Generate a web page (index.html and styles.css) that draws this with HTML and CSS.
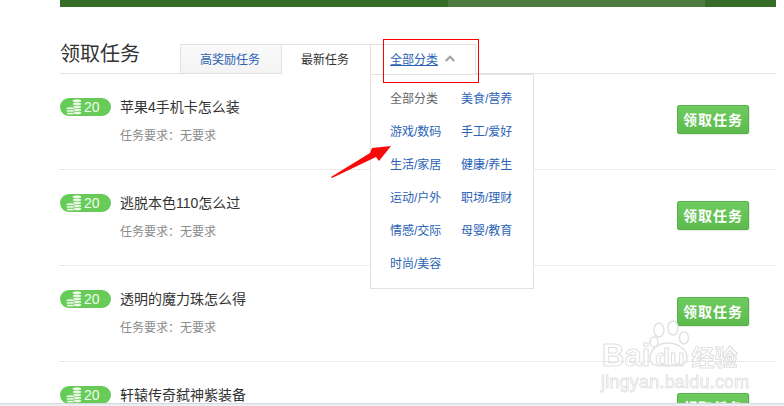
FILE: index.html
```html
<!DOCTYPE html>
<html lang="zh">
<head>
<meta charset="utf-8">
<title>领取任务</title>
<link rel="stylesheet" href="styles.css">
</head>
<body>
<svg class="defs" width="0" height="0" aria-hidden="true">
  <symbol id="coins" viewBox="0 0 16 16">
    <g fill="#eaf8e5">
      <ellipse cx="11" cy="1.800" rx="4.300" ry="1.600"/>
      <ellipse cx="11" cy="5" rx="4.300" ry="1.300"/>
      <ellipse cx="11" cy="8" rx="4.300" ry="1.300"/>
      <ellipse cx="11" cy="11" rx="4.300" ry="1.300"/>
      <ellipse cx="11" cy="14" rx="4.300" ry="1.300"/>
      <ellipse cx="4.500" cy="9.300" rx="4.300" ry="1.500" stroke="#66cb57" stroke-width=".8"/>
      <ellipse cx="4.500" cy="12" rx="4.300" ry="1.400" stroke="#66cb57" stroke-width=".8"/>
      <ellipse cx="4.500" cy="14.600" rx="4.300" ry="1.300" stroke="#66cb57" stroke-width=".8"/>
    </g>
  </symbol>
</svg>
<div class="page">
  <main class="wrap">
    <div class="banner"><div class="banner-mid"></div></div>
    <header class="head">
      <h1 class="title">领取任务</h1>
      <nav class="tabs">
        <a class="tab tab-off">高奖励任务</a>
        <a class="tab tab-on">最新任务</a>
        <div class="tab tab-cat">
          <a class="cat-link">全部分类</a>
          <svg class="caret" width="10" height="7" viewBox="0 0 10 7"><path d="M0.700 6 5 1.800 9.300 6" fill="none" stroke="#a0a0a0" stroke-width="2.200"/></svg>
          <div class="menu">
            <a class="menu-item menu-cur">全部分类</a><a class="menu-item">美食/营养</a>
            <a class="menu-item">游戏/数码</a><a class="menu-item">手工/爱好</a>
            <a class="menu-item">生活/家居</a><a class="menu-item">健康/养生</a>
            <a class="menu-item">运动/户外</a><a class="menu-item">职场/理财</a>
            <a class="menu-item">情感/交际</a><a class="menu-item">母婴/教育</a>
            <a class="menu-item">时尚/美容</a>
          </div>
        </div>
      </nav>
    </header>
    <ul class="list">
      <li class="row">
        <span class="badge"><svg class="coins" width="16" height="16"><use href="#coins"/></svg>20</span>
        <div class="info"><h2 class="name">苹果4手机卡怎么装</h2><p class="req">任务要求：无要求</p></div>
        <a class="btn">领取任务</a>
      </li>
      <li class="row">
        <span class="badge"><svg class="coins" width="16" height="16"><use href="#coins"/></svg>20</span>
        <div class="info"><h2 class="name">逃脱本色110怎么过</h2><p class="req">任务要求：无要求</p></div>
        <a class="btn">领取任务</a>
      </li>
      <li class="row">
        <span class="badge"><svg class="coins" width="16" height="16"><use href="#coins"/></svg>20</span>
        <div class="info"><h2 class="name">透明的魔力珠怎么得</h2><p class="req">任务要求：无要求</p></div>
        <a class="btn">领取任务</a>
      </li>
      <li class="row">
        <span class="badge"><svg class="coins" width="16" height="16"><use href="#coins"/></svg>20</span>
        <div class="info"><h2 class="name">轩辕传奇弑神紫装备</h2></div>
        <a class="btn">领取任务</a>
      </li>
    </ul>
  </main>
  <div class="mark-box"></div>
  <svg class="mark-arrow" width="64" height="36" viewBox="0 0 64 36"><polygon points="2,33 41,9 43,4 62,2 50,17 47,13 3,34" fill="#f80a0a"/></svg>
  <div class="wm">
    <svg class="wm-paw" width="44" height="48" viewBox="0 0 44 48"><g fill="#fff" stroke="#e2e2e2" stroke-width="1.500"><ellipse cx="11" cy="10" rx="5" ry="7"/><ellipse cx="25" cy="8" rx="5" ry="7"/><ellipse cx="36" cy="18" rx="4.500" ry="6"/><ellipse cx="6" cy="22" rx="4" ry="5"/><path d="M2 38c0-9 9-15 18-15s19 6 19 14c0 8-8 9-12 8-4 1-8 1-12 0-5 1-13 1-13-7z"/></g></svg>
    <div class="wm-logo">Bai<span class="wm-du">du</span><span class="wm-cn">经验</span></div>
    <div class="wm-url">jingyan.baidu.com</div>
  </div>
  <footer class="foot"></footer>
</div>
</body>
</html>
```
FILE: styles.css
```css
* { box-sizing: border-box; }
html, body { margin: 0; padding: 0; }
body {
  width: 784px;
  height: 406px;
  overflow: hidden;
  background: #fff;
  font-family: "Liberation Sans", "Noto Sans CJK SC", sans-serif;
  color: #333;
}
.defs { position: absolute; }
.page { position: relative; width: 784px; height: 406px; overflow: hidden; display: flex; flex-direction: column; }
.wrap { width: 716px; margin-left: 60px; height: 403px; overflow: visible; flex: none; }
.foot { height: 3px; flex: none; background: #e9eef1; border-top: 1px solid #d3dadd; position: relative; z-index: 5; }

.banner { height: 7px; background: #376c28; display: flex; padding-left: 388px; padding-right: 71px; }
.banner-mid { flex: 1; background: #4f7b43; }

.head { height: 67px; padding-top: 37px; border-bottom: 1px solid #e2e2e2; display: flex; align-items: stretch; }
.title { margin: -2px 0 0; width: 120px; font-size: 20px; line-height: 24px; height: 24px; font-weight: normal; color: #333; }
.tabs { display: flex; height: 30px; font-size: 12px; }
.tab { display: flex; align-items: center; height: 30px; padding-bottom: 2px; border-top: 1px solid #e2e2e2; }
.tab-off { width: 102px; padding-right: 2px; justify-content: center; color: #2a62b5; background: linear-gradient(#fafafa, #f3f3f3); border-left: 1px solid #e2e2e2; border-right: 1px solid #e2e2e2; border-bottom: 1px solid #e2e2e2; padding-bottom: 1px; }
.tab-on { width: 88px; padding-right: 2px; justify-content: center; color: #333; background: #fff; }
.tab-cat { position: relative; width: 106px; padding-left: 19px; background: #fff; border-left: 1px solid #e2e2e2; border-right: 1px solid #e2e2e2; z-index: 2; }
.cat-link { color: #2a62b5; text-decoration: underline; }
.caret { margin-left: 7px; }
.menu {
  position: absolute;
  left: -1px;
  top: 29px;
  width: 164px;
  height: 215px;
  padding: 8px 0 0 19px;
  background: #fff;
  border: 1px solid #e2e2e2;
  display: grid;
  grid-template-columns: 71px 71px;
  grid-auto-rows: 33px;
  align-content: start;
}
.menu-item { color: #2a62b5; line-height: 33px; font-size: 12px; white-space: nowrap; }
.menu-cur { color: #666; }

.list { list-style: none; margin: 0; padding: 0; }
.row { height: 96px; padding-top: 24px; display: flex; align-items: flex-start; border-bottom: 1px dotted #d6d6d6; }
.badge { width: 51px; height: 18px; flex: none; background: #66cb57; border-radius: 9px; display: flex; align-items: center; padding-left: 6px; gap: 2px; color: #f2fbef; font-size: 14px; }
.coins { flex: none; }
.info { flex: 1; margin-left: 9px; }
.name { margin: -1px 0 0; font-size: 14px; line-height: 20px; font-weight: normal; color: #333; }
.req { margin: 9px 0 0; font-size: 12px; line-height: 20px; color: #8c8c8c; }
.btn {
  flex: none;
  width: 72px;
  height: 29px;
  margin: 7px 27px 0 0;
  background: linear-gradient(#6fcb5f, #5dbb4e);
  border: 1px solid #55b347;
  border-radius: 2px;
  box-shadow: 1px 1px 0 #e9e9e9;
  color: #fff;
  font-family: "Noto Sans CJK SC", sans-serif;
  font-size: 14px;
  font-weight: bold;
  line-height: 27px;
  text-align: center;
  letter-spacing: 1px;
}

.mark-box { position: absolute; left: 383px; top: 39px; width: 96px; height: 44px; border: 1px solid #f00; z-index: 3; }
.mark-arrow { position: absolute; left: 329px; top: 144px; z-index: 3; }

.wm { position: absolute; left: 600px; top: 320px; width: 144px; height: 70px; z-index: 4; filter: blur(0.4px); }
.wm-paw { position: absolute; left: 48px; top: 0; }
.wm-logo { position: absolute; left: 2px; top: 20px; font: bold 31px/32px "Liberation Sans", sans-serif; color: transparent; -webkit-text-stroke: 1px #e0e0e0; white-space: nowrap; }
.wm-du { font-size: 24px; margin-left: 5px; }
.wm-cn { font: bold 23px/32px "Noto Sans CJK SC", sans-serif; margin-left: 7px; }
.wm-url { position: absolute; left: 1px; top: 52px; font: 18px/20px "Liberation Sans", sans-serif; color: transparent; -webkit-text-stroke: 1px #e4e4e4; white-space: nowrap; letter-spacing: 0.2px; }
```
